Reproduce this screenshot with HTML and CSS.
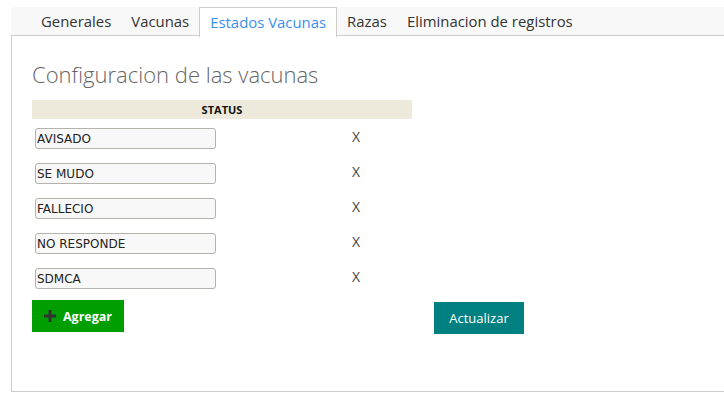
FILE: index.html
```html
<!DOCTYPE html>
<html>
<head>
<meta charset="utf-8">
<link rel="stylesheet" href="styles.css">
</head>
<body>
<div class="panel">
  <ul class="tabs">
    <li class="tab">Generales</li>
    <li class="tab">Vacunas</li>
    <li class="tab active">Estados Vacunas</li>
    <li class="tab">Razas</li>
    <li class="tab">Eliminacion de registros</li>
  </ul>
  <div class="content">
    <h1 class="title">Configuracion de las vacunas</h1>
    <div class="grid">
      <div class="head">STATUS</div>
      <div class="cell"><input class="field" value="AVISADO"></div><div class="del">X</div>
      <div class="cell"><input class="field" value="SE MUDO"></div><div class="del">X</div>
      <div class="cell"><input class="field" value="FALLECIO"></div><div class="del">X</div>
      <div class="cell"><input class="field" value="NO RESPONDE"></div><div class="del">X</div>
      <div class="cell"><input class="field" value="SDMCA"></div><div class="del">X</div>
    </div>
    <div class="actions">
      <button class="btn add"><svg class="plus" width="12" height="12" viewBox="0 0 12 12"><path d="M4.5 0h3v4.5H12v3H7.5V12h-3V7.5H0v-3h4.5z" fill="#333"/></svg>Agregar</button>
      <button class="btn update">Actualizar</button>
    </div>
  </div>
</div>
</body>
</html>
```

FILE: styles.css
```css
html, body { margin: 0; padding: 0; background: #fff; }
body { font-family: "Open Sans", "Liberation Sans", sans-serif; color: #333; }
.panel { margin: 7px 0 0 11px; width: 713px; }
.tabs {
  list-style: none; margin: 0; padding: 0 0 0 20px;
  display: flex; height: 28px; background: #f8f8f8;
  border-bottom: 1px solid #ccc;
}
.tab {
  padding: 0 10px;
  font-size: 14.9px; line-height: 28px; color: #333; white-space: nowrap;
}
.tab.active {
  background: #fff; border: 1px solid #ccc; border-bottom: none; color: #3a8ff0;
  height: 29px; line-height: 28px;
}
.content {
  border-left: 1px solid #ccc; border-bottom: 1px solid #ccc;
  padding: 20px 20px 0 20px; height: 356px; box-sizing: border-box;
}
.title {
  margin: 0; font-size: 22px; font-weight: 300; color: #666;
  line-height: 36px;
}
.grid {
  margin-top: 8px; width: 380px;
  display: grid; grid-template-columns: 268px 112px; grid-auto-rows: 35px;
  grid-template-rows: 28px;
}
.head {
  grid-column: 1 / 3; background: #edeadc; height: 19px;
  font-size: 11px; font-weight: 700; text-align: center; line-height: 20px; color: #111;
}
.cell { padding-left: 3px; }
.field {
  display: block; box-sizing: border-box; width: 181px; height: 21px; margin: 0;
  border: 1px solid #b5b2ab; border-radius: 3px; background: #f8f8f8;
  font-family: "DejaVu Sans", sans-serif; font-size: 12px; color: #222;
  padding: 0 1px; outline: none;
}
.del { text-align: center; font-size: 14px; line-height: 16px; padding-top: 1px; color: #444; }
.actions { display: flex; margin-top: -3px; }
.btn {
  border: none; color: #fff; font-family: "Open Sans", sans-serif; font-size: 13px;
  display: flex; align-items: center; justify-content: center; padding: 0;
}
.add { background: #009e00; width: 92px; height: 32px; font-weight: 700; font-size: 12.5px; }
.plus { margin-right: 7px; }
.update { background: #008080; width: 90px; height: 32px; margin: 2px 0 0 310px; }
```
